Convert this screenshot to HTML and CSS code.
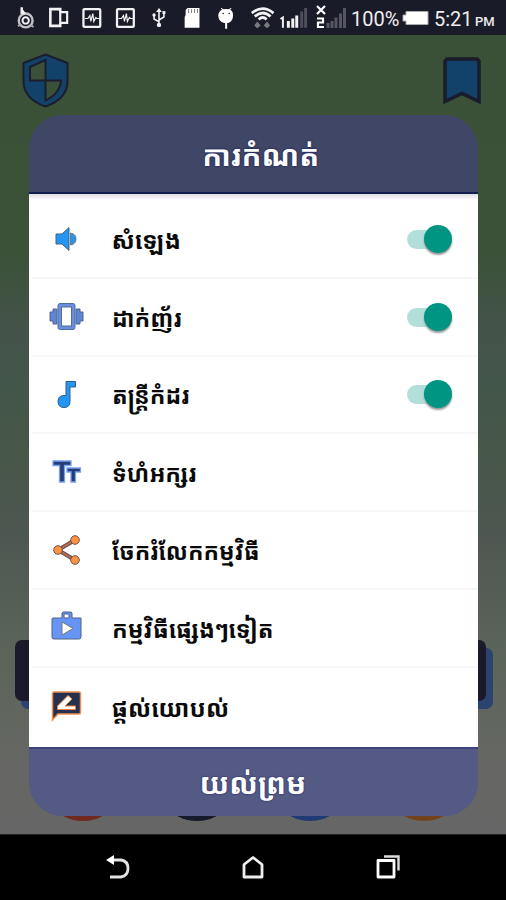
FILE: index.html
```html
<!DOCTYPE html>
<html lang="km">
<head>
<meta charset="utf-8">
<title>ការកំណត់</title>
<link rel="stylesheet" href="styles.css">
</head>
<body>
<div class="phone">
  <header class="status">
    <svg class="status-icons" width="320" height="35" viewBox="0 0 320 35" fill="none" stroke="#f2f2f4" stroke-width="2">
      <circle cx="26" cy="20.500" r="7" stroke="#c4c4c8" stroke-width="2.400"/><circle cx="26" cy="20.500" r="3.200" stroke-width="2"/><path d="M22 7v7M22 10l3 4" stroke-width="2.500"/><path d="M18 26l4-1M34 27l-4-2" stroke="#aaa"/>
      <path d="M61 12V9H51v17h10v-3" stroke-width="2.600"/><path d="M61 12h7v11h-7z" stroke-width="2.200"/>
      <g><rect x="84.500" y="9" width="17" height="18" rx="1" stroke-width="2.300"/><path d="M86 18.500h3l2-3 1 6 2-8 1 8 2-4 1 1h2.500" stroke-width="1.200"/></g>
      <g transform="translate(34 0)"><rect x="84.500" y="9" width="17" height="18" rx="1" stroke-width="2.300"/><path d="M86 18.500h3l2-3 1 6 2-8 1 8 2-4 1 1h2.500" stroke-width="1.200"/></g>
      <path d="M161 12v13M161 22l-5-3v-4M161 20l5-3v-4" stroke-width="1.600"/><path d="M161 8l3 4h-6z" fill="#f2f2f4" stroke="none"/><circle cx="161" cy="25" r="2.200" fill="#f2f2f4" stroke="none"/><circle cx="156" cy="15" r="1.700" fill="#f2f2f4" stroke="none"/><path d="M164.500 11h3v3h-3z" fill="#f2f2f4" stroke="none"/>
      <path d="M190 8h12v20h-15V17l1-2v-5z" fill="#fff" stroke="none"/><path d="M191 9v4M194 9v4M197 9v4M200 9v4" stroke="#77777d" stroke-width="1"/>
      <path d="M224 8l3 3M234 8l-3 3" stroke-width="1.200"/><path d="M221 15q1-6 8-6t7 6q0 7-5 8h-1v6h-2v-6h-1q-6-1-6-8z" fill="#fff" stroke="none"/><circle cx="226" cy="13.500" r=".8" fill="#1a1b29" stroke="none"/><circle cx="232" cy="13.500" r=".8" fill="#1a1b29" stroke="none"/>
      <path d="M255 13q11-9 22 0M258 16.500q8-7 16 0M262 19.500q4-4 8 0" stroke-width="2.800"/><path d="M260.500 21.500l3.500 4-3.500 3-3-3zM270.500 21.500l3 4-3 3-3.500-3z" fill="#777b80" stroke="none"/>
      <path d="M284 19l2.500-1.500V28" /><path d="M292 21v7M296.500 18.500V28M300.500 15.500V28" stroke-width="3"/><path d="M305.500 11.500V28M309.500 8V28" stroke="#4d4e5a" stroke-width="3"/>
    </svg>
    <svg class="signal-two" width="32" height="35" viewBox="316 0 32 35" fill="none" stroke="#fff" stroke-width="2.200">
      <path d="M317 6l8 8M325 6l-8 8M317 18.500h6v4h-5v4.500h6"/><path d="M328 23v5M332 21v7M336 17.500V28M340.500 13.500V28M344.500 8V28" stroke="#555662" stroke-width="3"/>
    </svg>
    <span class="percent">100%</span>
    <svg class="battery" width="28" height="16"><path d="M1 5h3V1.500h22v13H4V11H1z" fill="#fff" stroke="#aaa" stroke-width="1"/></svg>
    <span class="clock">5:21</span><span class="meridiem">PM</span>
  </header>
  <main class="screen">
    <svg class="backdrop" width="506" height="799" viewBox="0 35 506 799">
      <g stroke="#1b1d2d" stroke-width="2"><path d="M45.500 54.500L67.500 63v18q0 18-22 25.500Q23.500 99 23.500 81V63z" fill="#124269"/><path d="M45.500 60L30 67v13.500h15.500zM45.500 80.500H61q-1 13-15.500 20z" fill="#3b5038"/></g>
      <path d="M445 61l2-2h30l2 2v40.500l-17-8-17 8z" fill="#124269" stroke="#1a1b2b" stroke-width="3.500"/>
      <rect x="21" y="648" width="472" height="61" rx="7" fill="#2c426f"/><rect x="15" y="640" width="471" height="61" rx="7" fill="#1a1a2b"/>
      <ellipse cx="83" cy="805" rx="27" ry="16" fill="#70291f"/><ellipse cx="197" cy="805" rx="27" ry="16" fill="#171a2b"/><ellipse cx="310" cy="805" rx="27" ry="16" fill="#203b73"/><ellipse cx="424" cy="805" rx="27" ry="16" fill="#71421c"/>
    </svg>
    <section class="dialog">
      <h1 class="title"><span>ការកំណត់</span></h1>
      <ul class="options">
        <li class="row"><svg class="icon" viewBox="0 0 36 36"><path d="M7 14h6l7-6.500v23L13 24H7z" fill="#2196f3" stroke="#47627c"/><path d="M21.500 13q5.500 1 5.500 6t-5.500 6z" fill="#2196f3" stroke="#777"/></svg><span class="label natural">សំឡេង</span><i class="switch"></i></li>
        <li class="row"><svg class="icon" viewBox="0 0 36 36"><path d="M1 14h3v-3h4v15H4v-3H1zM34 14h-3v-3h-4v15h4v-3h3z" fill="#5d86d4" stroke="#53658c"/><rect x="9" y="5.500" width="17" height="26" rx="2" fill="#6c8fdd" stroke="#536ca0"/><rect x="12.500" y="9" width="10" height="19" fill="#fff" stroke="#536ca0"/></svg><span class="label">ដាក់ញ័រ</span><i class="switch"></i></li>
        <li class="row"><svg class="icon" viewBox="0 0 36 36"><path d="M17 5.500h9.500v5.500h-5.500v14.500q0 6-6 6t-6-6 6-6h2z" fill="#2196f3" stroke="#315f8e"/></svg><span class="label">តន្ត្រីកំដរ</span><i class="switch"></i></li>
        <li class="row"><svg class="icon" viewBox="0 0 36 36"><path d="M4 7h18v4.500h-6.500V28h-5V11.500H4zM18 14h13.500v4h-5v10h-4.500V18h-4z" fill="#263d78" stroke="#77a2ed" stroke-width="1.300"/></svg><span class="label">ទំហំអក្សរ</span></li>
        <li class="row"><svg class="icon" viewBox="0 0 36 36"><path d="M26 8L9 18l17 10" fill="none" stroke="#635059" stroke-width="4"/><path d="M26 8L9 18l17 10" fill="none" stroke="#c97042" stroke-width="1.500"/><g fill="#ff923d" stroke="#695056"><circle cx="26" cy="8" r="4.300"/><circle cx="9" cy="18" r="4.300"/><circle cx="26" cy="28" r="4.300"/></g></svg><span class="label narrow">ចែករំលែកកម្មវិធី</span></li>
        <li class="row"><svg class="icon" viewBox="0 0 36 36"><path d="M4 9q-1 0-1 1v18q0 2 2 2h25q2 0 2-2V9h-9V4l-1-1h-8l-1 1v5zm11 0V5h5v4z" fill="#6795f5" fill-rule="evenodd" stroke="#4e638b"/><path d="M13 13v13l11-6.500z" fill="#fff" stroke="#777"/></svg><span class="label">កម្មវិធីផ្សេងៗទៀត</span></li>
        <li class="row"><svg class="icon" viewBox="0 0 36 36"><path d="M5 4h25q1.500 0 1.500 1.500v19q0 1.500-1.500 1.500H9l-5.500 6V5.500Q3.500 4 5 4z" fill="#25314e" stroke="#ef8f50" stroke-width="1.500"/><path d="M8.500 21.500v-3.500L19 7.500l4 3.500-7 7h10.500v3.500z" fill="#fff" stroke="#ee813e"/></svg><span class="label natural">ផ្តល់យោបល់</span></li>
      </ul>
      <button class="confirm"><span>យល់ព្រម</span></button>
    </section>
  </main>
  <nav class="nav">
    <svg viewBox="0 0 28 28"><path d="M5 7h12q7 1 7 8.500T17 24H6" fill="none" stroke="#e4e4e4" stroke-width="2.800"/><path d="M2 7l8-5v10z" fill="#fff"/></svg>
    <svg viewBox="0 0 28 28"><path d="M5 11.500l9-7 9 7V24H5z" fill="none" stroke="#eee" stroke-width="2.800" stroke-linejoin="round"/></svg>
    <svg viewBox="0 0 28 28"><path d="M10 3.500h14.500v14" fill="none" stroke="#ddd" stroke-width="2.400"/><rect x="4" y="7.500" width="16" height="16.500" fill="none" stroke="#fff" stroke-width="2.800" stroke-linejoin="round"/></svg>
  </nav>
</div>
</body>
</html>
```
FILE: styles.css
```css
* { box-sizing: border-box; }
body { margin: 0; background: #000; font-family: "Noto Sans Khmer", "Khmer OS", "Noto Sans", "DejaVu Sans", sans-serif; }
.phone { width: 506px; height: 900px; display: flex; flex-direction: column; overflow: hidden; }
.status { height: 35px; flex: none; display: flex; align-items: center; background: #1a1b29; color: #eee; font-family: Roboto, sans-serif; white-space: nowrap; }
.status-icons { width: 316px; flex: none; overflow: hidden; }
.signal-two { flex: none; }
.percent { width: 49px; margin-left: 3px; font-size: 20px; line-height: 35px; padding-top: 3px; }
.battery { margin: 1px 4px 0 2px; flex: none; }
.clock { font-size: 20px; width: 37px; padding-top: 3px; }
.meridiem { font-size: 13px; font-weight: 500; margin-left: 4px; padding-top: 7px; }
.screen { position: relative; height: 799px; padding: 80px 28px 18px 29px; background: linear-gradient(#3a5137 0, #3b5238 27%, #44534a 37%, #43564a 44%, #475748 52%, #4d5751 62%, #5c655a 78%, #666764 92%, #666 100%); }
.backdrop { position: absolute; inset: 0; }
.dialog { position: relative; height: 701px; border-radius: 34px; overflow: hidden; display: flex; flex-direction: column; background: linear-gradient(#404665 50%, #545a83 50%); }
.title { height: 79px; margin: 0; display: flex; align-items: center; justify-content: center; background: #404665; color: #fff; border-bottom: 2px solid #17205d; font-size: 28px; line-height: 40px; font-weight: 700; text-shadow: 0 0 2px #070d59; }
.title span { transform: translate(7px, 1px) scaleX(1.05); }
.options { height: 553px; margin: 0; padding: 7px 0 0; list-style: none; background: linear-gradient(#dedee5, #fff 6px); box-shadow: 0 0 2px #0a2410; }
.row { height: 77.8px; padding: 0 26px 0 20px; margin-left: 3px; display: flex; align-items: center; border-bottom: 2px solid #f7f7f7; }
.row:last-child { border: 0; }
.icon { width: 36px; height: 36px; flex: none; margin-top: -1px; margin-left: -3px; }
.label { margin-left: 26.5px; padding-top: 2px; font-size: 24px; font-weight: 700; color: #0a0a0a; white-space: nowrap; line-height: 36px; transform: scaleX(.966); transform-origin: left; }
.label.natural { transform: none; }
.label.narrow { transform: scaleX(.954); }
.switch { position: relative; width: 46px; height: 30px; margin-left: auto; }
.switch::before { content: ""; position: absolute; left: 1px; top: 6px; width: 38px; height: 19px; border-radius: 10px; background: #b2dfd9; }
.switch::after { content: ""; position: absolute; right: 0; top: 1px; width: 28px; height: 28px; border-radius: 50%; background: #009483; box-shadow: 0 2px 2px #999; }
.confirm { height: 69px; width: 100%; padding: 0; border: 0; border-top: 2px solid #3c427b; background: #545a83; color: #fff; font: inherit; font-size: 28px; font-weight: 700; line-height: 40px; text-shadow: 0 0 2px #151b65; }
.confirm span { display: inline-block; transform: scaleX(1.06); }
.nav { height: 66px; flex: none; display: flex; justify-content: center; align-items: center; gap: 107px; padding-bottom: 2px; background: #000; border-top: 1px solid #222; }
.nav svg { width: 28px; height: 28px; }
```
